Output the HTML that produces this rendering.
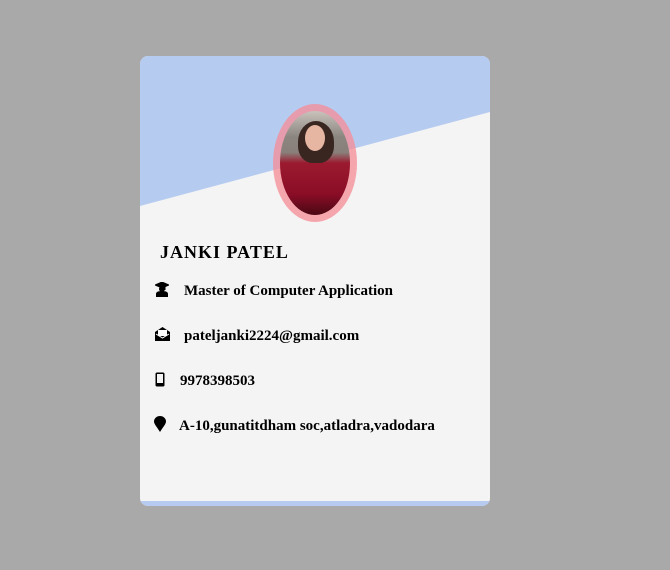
<!DOCTYPE html>
<html><head><style>
html,body{margin:0;padding:0;}
body{width:670px;height:570px;background:#a9a9a9;position:relative;overflow:hidden;font-family:"Liberation Serif",serif;}
.card{position:absolute;left:140px;top:56px;width:350px;height:450px;background:#f4f4f4;border-radius:8px;overflow:hidden;}
.card svg.bg{position:absolute;left:0;top:0;}
.bb{position:absolute;left:0;bottom:0;width:350px;height:5px;background:#b6cbef;}
.ph{position:absolute;left:133px;top:48px;width:84px;height:118px;border-radius:50%;background:rgba(245,140,150,0.75);}
.in{position:absolute;left:7px;top:7px;width:70px;height:104px;border-radius:50%;overflow:hidden;background:linear-gradient(#c9c2bb 0%,#8b8580 25%,#8a7f7a 40%,#9b1a2f 50%,#8a0d26 80%,#4a0814 100%);}
.face{position:absolute;left:25px;top:14px;width:20px;height:26px;border-radius:50%;background:#e6b6a2;}
.hair{position:absolute;left:18px;top:10px;width:36px;height:42px;border-radius:50% 50% 40% 40%;background:#3a2620;}
.t{position:absolute;font-weight:bold;color:#000;font-size:15px;white-space:nowrap;}
.name{position:absolute;left:20px;top:186px;font-size:18px;font-weight:bold;letter-spacing:1px;}
.ic{position:absolute;}
</style></head><body>
<div class="card">
<svg class="bg" width="350" height="450"><polygon points="0,0 350,0 350,56 0,150" fill="#b6cbf0"/></svg>
<div class="ph"><div class="in"><div class="hair"></div><div class="face"></div></div></div>
<div class="name">JANKI PATEL</div>
<svg class="ic" style="left:15px;top:226px" width="14" height="15" viewBox="0 0 14 15"><path d="M0 3L7 0L14 3L7 6Z M10 4v4" fill="#000" stroke="#000"/><circle cx="7" cy="7" r="3" fill="#000"/><path d="M1 15v-3c0-2 2-3 6-3s6 1 6 3v3z" fill="#000"/></svg>
<div class="t" style="left:44px;top:227px">Master of Computer Application</div>
<svg class="ic" style="left:15px;top:271px" width="15" height="14" viewBox="0 0 15 14"><path d="M0 5L7.5 0L15 5V14H0Z" fill="#000"/><rect x="3" y="3" width="9" height="6" fill="#fff"/><path d="M1 7L7.5 11L14 7" stroke="#fff" fill="none"/></svg>
<div class="t" style="left:44px;top:272px">pateljanki2224@gmail.com</div>
<svg class="ic" style="left:15px;top:316px" width="10" height="15" viewBox="0 0 10 15"><rect x="0.5" y="0.5" width="9" height="14" rx="1.5" fill="#000"/><rect x="2" y="2" width="6" height="9" fill="#f4f4f4"/></svg>
<div class="t" style="left:40px;top:317px">9978398503</div>
<svg class="ic" style="left:14px;top:360px" width="12" height="16" viewBox="0 0 12 16"><path d="M6 16C3 11 0 8 0 5.5A6 5.5 0 0 1 12 5.5C12 8 9 11 6 16Z" fill="#000"/></svg>
<div class="t" style="left:39px;top:362px">A-10,gunatitdham soc,atladra,vadodara</div>
<div class="bb"></div>
</div>
</body></html>
